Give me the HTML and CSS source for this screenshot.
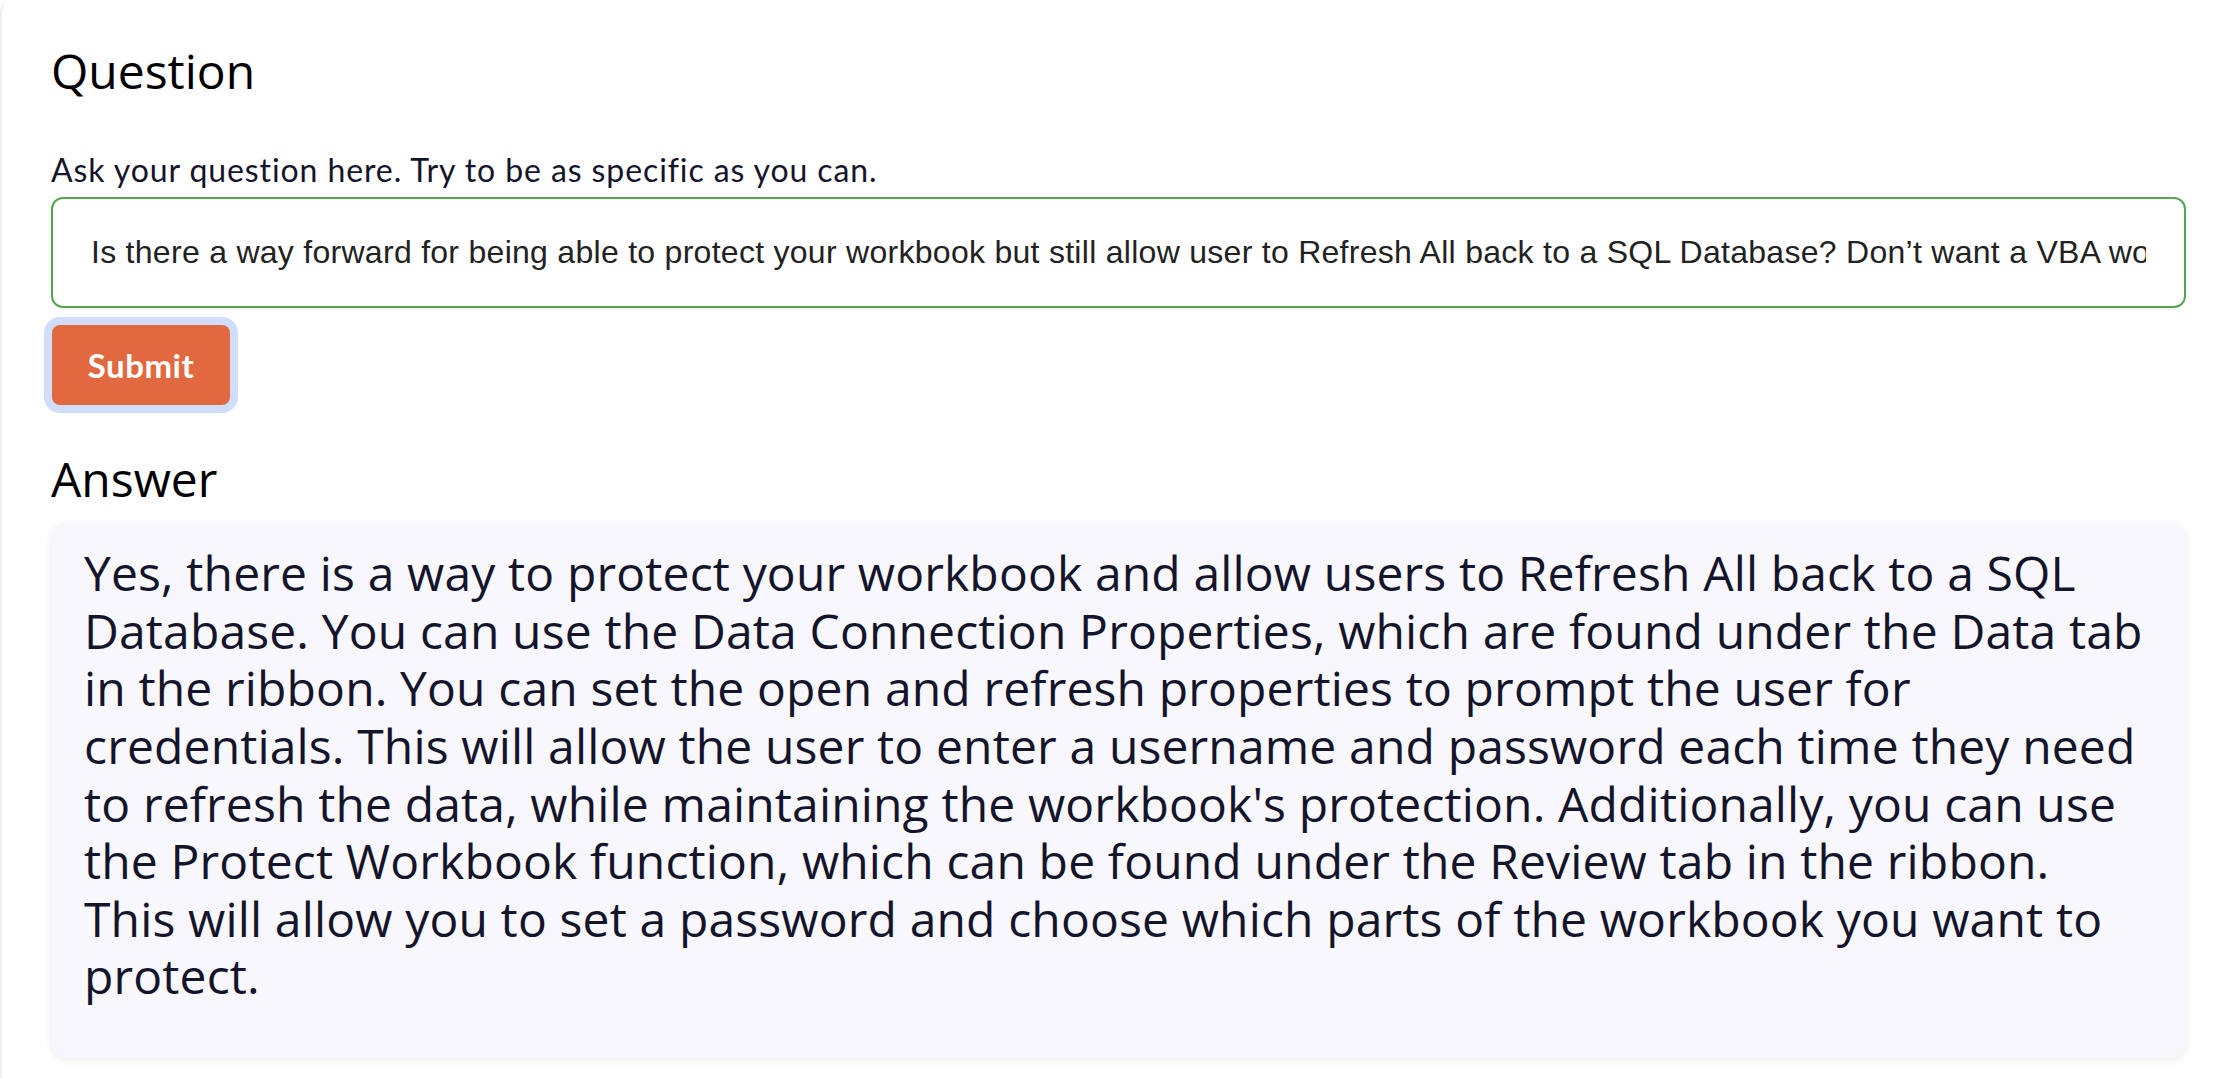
FILE: index.html
```html
<!DOCTYPE html>
<html lang="en">
<head>
    <meta charset="UTF-8">
    <meta name="viewport" content="width=device-width, initial-scale=1.0">
    <title>Question</title>
    <link rel="stylesheet" href="styles.css">
</head>
<body>
    <div class="page">
        <form class="ask-form" onsubmit="return false">
            <h2>Question</h2>
            <label for="question">Ask your question here. Try to be as specific as you can.</label>
            <input type="text" id="question" name="question" value="Is there a way forward for being able to protect your workbook but still allow user to Refresh All back to a SQL Database? Don’t want a VBA workaround if possible.">
            <div class="actions">
                <button type="submit" class="submit-btn">Submit</button>
            </div>
        </form>

        <h2>Answer</h2>
        <div class="answer">
            <p>Yes, there is a way to protect your workbook and allow users to Refresh All back to a SQL Database. You can use the Data Connection Properties, which are found under the Data tab in the ribbon. You can set the open and refresh properties to prompt the user for credentials. This will allow the user to enter a username and password each time they need to refresh the data, while maintaining the workbook's protection. Additionally, you can use the Protect Workbook function, which can be found under the Review tab in the ribbon. This will allow you to set a password and choose which parts of the workbook you want to protect.</p>
        </div>
    </div>
</body>
</html>
```

FILE: styles.css
```css
body {
    margin: 0;
    background-color: #ffffff;
    font-family: "Open Sans", sans-serif;
}

.page {
    border-left: 2px solid #f0f0f4;
    border-top-left-radius: 12px;
    min-height: 1078px;
    box-sizing: border-box;
    padding: 42px 34px 0 49px;
}

.page h2 {
    font-size: 48px;
    font-weight: 400;
    line-height: 1.2;
    color: #000000;
    margin: 0;
}

.ask-form label {
    display: block;
    font-family: "Lato", sans-serif;
    font-size: 32px;
    letter-spacing: 0.9px;
    color: #14142b;
    margin-top: 50px;
    margin-bottom: 8px;
}

.ask-form input {
    display: block;
    width: 100%;
    height: 111px;
    box-sizing: border-box;
    padding: 0 38px;
    border: 2px solid #55a64f;
    border-radius: 12px;
    font-family: "Liberation Sans", sans-serif;
    font-size: 32px;
    letter-spacing: 0.28px;
    color: #222222;
    outline: none;
}

.actions {
    padding: 17px 0 0 1px;
}

.submit-btn {
    width: 178px;
    height: 80px;
    border: none;
    border-radius: 8px;
    background-color: #e2693f;
    color: #ffffff;
    font-family: "Lato", sans-serif;
    font-weight: 700;
    font-size: 33px;
    letter-spacing: 0.5px;
    box-shadow: 0 0 0 8px #d0ddfb;
    cursor: pointer;
}

.ask-form {
    margin-bottom: 45px;
}

.answer {
    margin-top: 16px;
    background-color: #f7f7fc;
    border-radius: 16px;
    box-shadow: 0 2px 8px rgba(0, 0, 0, 0.08);
    padding: 21px 41px 53px 33px;
}

.answer p {
    margin: 0;
    font-size: 48px;
    line-height: 1.2;
    letter-spacing: 0.15px;
    color: #14142b;
}
```
